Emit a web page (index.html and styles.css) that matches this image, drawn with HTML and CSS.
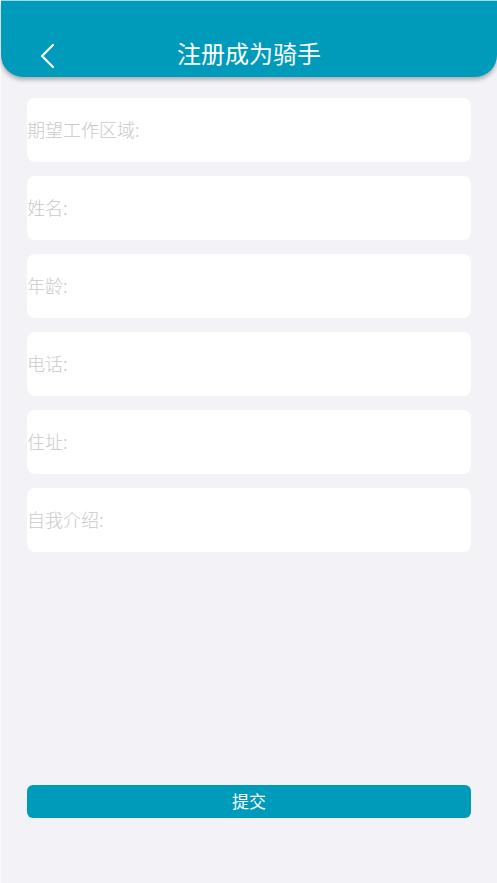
FILE: index.html
```html
<!DOCTYPE html>
<html lang="zh">
<head>
<meta charset="utf-8">
<link rel="stylesheet" href="styles.css">
</head>
<body>
<div class="app">
  <header class="header">
    <svg class="back" width="16" height="26" viewBox="0 0 16 26"><path d="M14 2 L3 13 L14 24" fill="none" stroke="#fff" stroke-width="2.2" stroke-linecap="round" stroke-linejoin="round"/></svg>
    <h1 class="title">注册成为骑手</h1>
  </header>
  <main class="form">
    <div class="field">期望工作区域:</div>
    <div class="field">姓名:</div>
    <div class="field">年龄:</div>
    <div class="field">电话:</div>
    <div class="field">住址:</div>
    <div class="field">自我介绍:</div>
  </main>
  <button class="submit">提交</button>
</div>
</body>
</html>
```
FILE: styles.css
```css
html, body {
  margin: 0;
  padding: 0;
  background: #fbfbfd;
}
body {
  font-family: "Noto Sans CJK SC", "Noto Sans", sans-serif;
  padding-left: 1px;
}
.app {
  height: 883px;
  background: #f2f2f7;
  display: flex;
  flex-direction: column;
  border-top: 1px solid #a8d8e3;
  box-sizing: border-box;
}
.header {
  height: 76px;
  background: #009bba;
  border-radius: 0 0 22px 22px;
  box-shadow: 0 3px 4px rgba(0,0,0,0.28);
  position: relative;
  display: flex;
  align-items: center;
  justify-content: center;
  padding-top: 28px;
  box-sizing: border-box;
  z-index: 1;
}
.back {
  position: absolute;
  left: 38px;
  top: 42px;
}
.title {
  margin: 0;
  font-size: 24px;
  font-weight: 400;
  color: #fff;
  line-height: 30px;
}
.form {
  display: flex;
  flex-direction: column;
  gap: 14px;
  padding: 21px 26px 0 26px;
  flex: 1;
}
.field {
  height: 64px;
  background: #fff;
  border-radius: 8px;
  display: flex;
  align-items: center;
  font-size: 18px;
  font-weight: 300;
  color: #c9c9c9;
  padding-bottom: 2px;
  box-sizing: border-box;
}
.submit {
  margin: 0 26px 65px 26px;
  height: 33px;
  border: none;
  border-radius: 6px;
  background: #009bba;
  color: #fff;
  font-family: "Noto Sans CJK SC", sans-serif;
  font-size: 17px;
  padding: 0 0 2px 0;
}
```
